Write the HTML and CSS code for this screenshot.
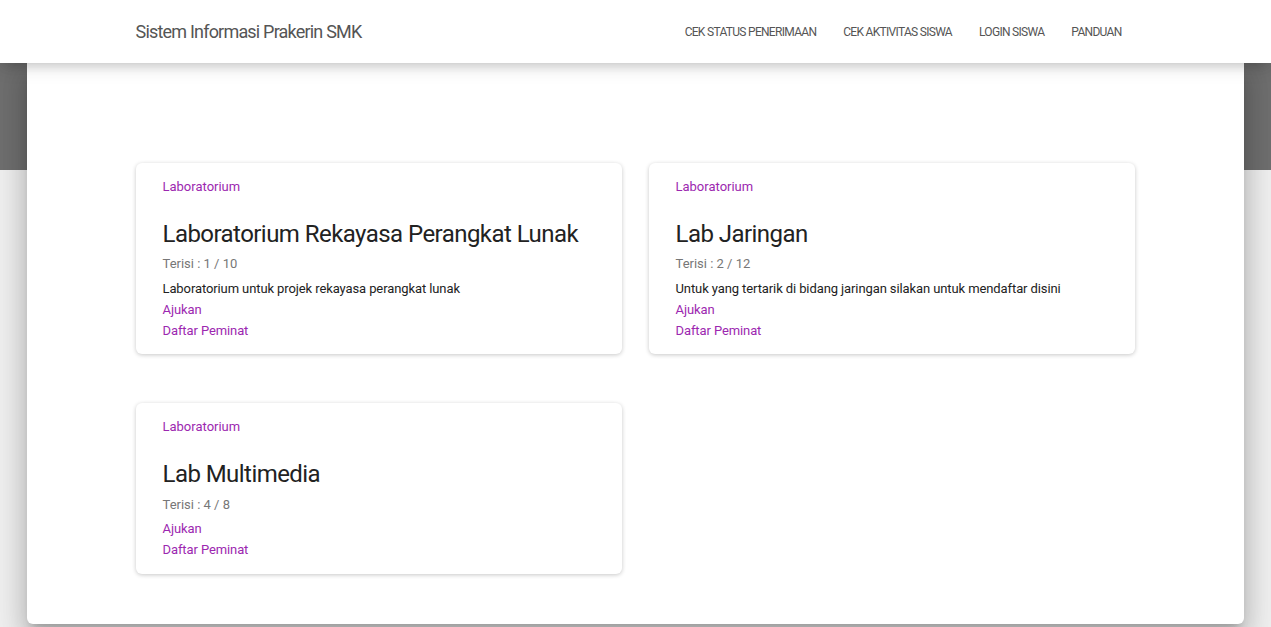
FILE: index.html
```html
<!DOCTYPE html>
<html lang="id">
<head>
<meta charset="utf-8">
<title>Sistem Informasi Prakerin SMK</title>
<link rel="stylesheet" href="styles.css">
</head>
<body>
<nav class="navbar">
  <div class="container nav-inner">
    <a class="brand" href="#">Sistem Informasi Prakerin SMK</a>
    <ul class="nav-links">
      <li><a href="#">Cek Status Penerimaan</a></li>
      <li><a href="#">Cek Aktivitas Siswa</a></li>
      <li><a href="#">Login Siswa</a></li>
      <li><a href="#">Panduan</a></li>
    </ul>
  </div>
</nav>
<div class="header-band"></div>
<main class="main-raised">
  <div class="container">
    <div class="card-grid">
      <div class="card">
        <div class="category">Laboratorium</div>
        <h3 class="title">Laboratorium Rekayasa Perangkat Lunak</h3>
        <div class="filled">Terisi : 1 / 10</div>
        <p class="desc">Laboratorium untuk projek rekayasa perangkat lunak</p>
        <a class="link" href="#">Ajukan</a>
        <a class="link" href="#">Daftar Peminat</a>
      </div>
      <div class="card">
        <div class="category">Laboratorium</div>
        <h3 class="title">Lab Jaringan</h3>
        <div class="filled">Terisi : 2 / 12</div>
        <p class="desc">Untuk yang tertarik di bidang jaringan silakan untuk mendaftar disini</p>
        <a class="link" href="#">Ajukan</a>
        <a class="link" href="#">Daftar Peminat</a>
      </div>
      <div class="card card-short">
        <div class="category">Laboratorium</div>
        <h3 class="title">Lab Multimedia</h3>
        <div class="filled">Terisi : 4 / 8</div>
        <p class="desc empty"></p>
        <a class="link" href="#">Ajukan</a>
        <a class="link" href="#">Daftar Peminat</a>
      </div>
    </div>
  </div>
</main>
</body>
</html>
```

FILE: styles.css
```css
* { box-sizing: border-box; }
html, body { margin: 0; padding: 0; }
body {
  font-family: Roboto, "Helvetica Neue", Arial, sans-serif;
  background: #eeeeee;
  color: #3c4858;
  height: 627px;
  overflow: hidden;
}
a { text-decoration: none; }

.container {
  width: 1000px;
  margin: 0 auto;
}

.navbar {
  position: relative;
  z-index: 3;
  height: 63px;
  background: #fff;
  box-shadow: 0 4px 18px 0 rgba(0,0,0,.12), 0 7px 10px -5px rgba(0,0,0,.15);
}
.nav-inner {
  height: 63px;
  display: flex;
  align-items: center;
  justify-content: space-between;
}
.brand {
  font-size: 18px;
  letter-spacing: -0.8px;
  color: #555;
}
.nav-links {
  list-style: none;
  margin: 0;
  padding: 0;
  display: flex;
}
.nav-links a {
  display: block;
  padding: 0 13.5px;
  font-size: 12px;
  letter-spacing: -0.7px;
  text-transform: uppercase;
  color: #555;
  line-height: 20px;
}
.nav-links li:last-child a { padding-right: 14px; }

.header-band {
  height: 107px;
  background: #6e6e6e;
}

.main-raised {
  position: relative;
  z-index: 2;
  margin: -107px 27px 0;
  height: 561px;
  background: #fff;
  border-radius: 0 0 6px 6px;
  box-shadow: 0 16px 24px 2px rgba(0,0,0,.14), 0 6px 30px 5px rgba(0,0,0,.12), 0 8px 10px -5px rgba(0,0,0,.2);
  padding-top: 100px;
}

.card-grid {
  display: grid;
  grid-template-columns: 486px 486px;
  column-gap: 27px;
  row-gap: 49px;
  align-items: start;
}

.card {
  background: #fff;
  border-radius: 6px;
  box-shadow: 0 1px 4px 0 rgba(0,0,0,.22);
  padding: 13px 27px 13px;
  display: flex;
  flex-direction: column;
  align-items: flex-start;
}
.card-short { padding-bottom: 14px; }
.category {
  font-size: 13px;
  line-height: 21px;
  color: #9c27b0;
}
.title {
  margin: 23px 0 0;
  font-size: 24px;
  font-weight: 400;
  line-height: 29px;
  letter-spacing: -0.55px;
  color: #222;
  white-space: nowrap;
}
.filled {
  margin-top: 4px;
  font-size: 13px;
  line-height: 21px;
  color: #777;
}
.card-short .filled { margin-top: 5px; }
.desc {
  margin: 4px 0 0;
  font-size: 13px;
  line-height: 21px;
  letter-spacing: -0.1px;
  color: #222;
}
.desc.empty { height: 3px; margin: 0; }
.link {
  font-size: 13px;
  line-height: 21px;
  letter-spacing: -0.1px;
  color: #9c27b0;
}
```
